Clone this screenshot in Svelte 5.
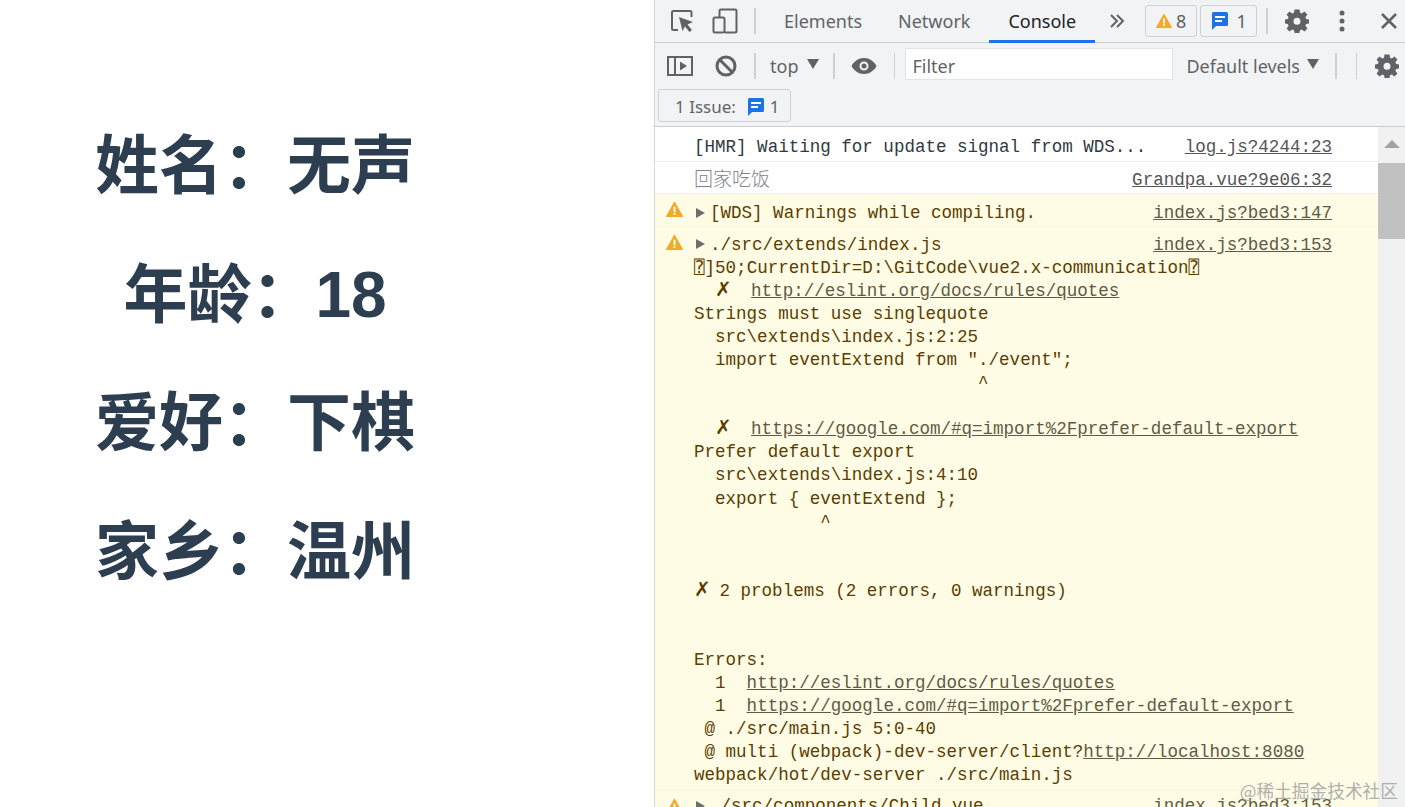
<script>
	const block = [
		'./src/extends/index.js',
		'⍰]50;CurrentDir=D:\\GitCode\\vue2.x-communication⍰',
		'  ✗  http://eslint.org/docs/rules/quotes',
		'Strings must use singlequote',
		'  src\\extends\\index.js:2:25',
		'  import eventExtend from "./event";',
		'                           ^',
		'',
		'  ✗  https://google.com/#q=import%2Fprefer-default-export',
		'Prefer default export',
		'  src\\extends\\index.js:4:10',
		'  export { eventExtend };',
		'            ^',
		'',
		'',
		'✗ 2 problems (2 errors, 0 warnings)',
		'',
		'',
		'Errors:',
		'  1  http://eslint.org/docs/rules/quotes',
		'  1  https://google.com/#q=import%2Fprefer-default-export',
		' @ ./src/main.js 5:0-40',
		' @ multi (webpack)-dev-server/client?http://localhost:8080',
		'webpack/hot/dev-server ./src/main.js'
	];

	// split a line into plain text, links and the cross marks
	function parts(line) {
		return line.split(/(https?:\/\/\S+|✗)/).map((text, i) => ({
			text,
			link: i % 2 === 1 && text !== '✗',
			cross: text === '✗'
		}));
	}

	const info = [
		{ label: '姓名\uFF1A', value: '无声' },
		{ label: '年龄\uFF1A', value: '18' },
		{ label: '爱好\uFF1A', value: '下棋' },
		{ label: '家乡\uFF1A', value: '温州' }
	];
</script>

{#snippet warnIcon(size)}
	<svg class="warn-icon" width={size} height={size} viewBox="0 0 16 16">
		<path d="M8 1.2 15.600 14.600H.4Z" fill="#f2ab26" stroke="#f2ab26" stroke-linejoin="round" />
		<rect x="7.100" y="5.400" width="1.800" height="5" fill="#fff" />
		<rect x="7.100" y="11.200" width="1.800" height="1.800" fill="#fff" />
	</svg>
{/snippet}

{#snippet msgIcon()}
	<svg width="18" height="20" viewBox="0 0 18 20">
		<path d="M2.500 1H15.500A1.500 1.500 0 0 1 17 2.500V13.500A1.500 1.500 0 0 1 15.500 15H5L1 19V2.500A1.500 1.500 0 0 1 2.500 1Z" fill="#1a73e8" />
		<rect x="4" y="5" width="10" height="2" fill="#fff" />
		<rect x="4" y="9" width="7" height="2" fill="#fff" />
	</svg>
{/snippet}

{#snippet gear()}
	<svg width="24" height="24" viewBox="0 0 24 24">
		<path
			d="M9.500 .5H14.500L15 3.800 16.800 4.600 19.500 2.600 22.400 5.500 20.400 8.200 21.200 10 24 10.500V14.500L21.200 15 20.400 16.800 22.400 19.500 19.500 22.400 16.800 20.400 15 21.200 14.500 24H9.500L9 21.200 7.200 20.400 4.500 22.400 1.600 19.500 3.600 16.800 2.800 15 0 14.500V10.500L2.800 10 3.600 8.200 1.600 5.500 4.500 2.600 7.200 4.600 9 3.800ZM12 8.800A3.500 3.500 0 1 0 12 15.800 3.500 3.500 0 1 0 12 8.800Z"
			fill="#5f6368"
			fill-rule="evenodd"
		/>
	</svg>
{/snippet}

<div class="page">
	<main class="card">
		{#each info as row}
			<h1>{row.label}{row.value}</h1>
		{/each}
	</main>

	<aside class="devtools">
		<nav class="tabs">
			<svg class="inspect" width="24" height="24" viewBox="0 0 24 24" fill="none">
				<path d="M8 21H3.500A1.500 1.500 0 0 1 2 19.500V3.500A1.500 1.500 0 0 1 3.500 2H20A1.500 1.500 0 0 1 21.500 3.500V8" stroke="#5f6368" stroke-width="2" />
				<path d="M9 8 23 13 17.500 15.500 22 21 19.500 23 15 17.500 12.500 22Z" fill="#5f6368" />
			</svg>
			<svg class="device" width="26" height="26" viewBox="0 0 26 26" fill="none" stroke="#5f6368" stroke-width="2">
				<path d="M7.500 9V3A1.500 1.500 0 0 1 9 1.500H23A1.500 1.500 0 0 1 24.500 3V23A1.500 1.500 0 0 1 23 24.500H13" />
				<rect x="1.500" y="9.500" width="11" height="15" rx="1.500" />
			</svg>
			<span class="sep tall"></span>
			<span class="tab elements">Elements</span>
			<span class="tab network">Network</span>
			<span class="tab active">Console</span>
			<svg class="more" width="16" height="14" viewBox="0 0 16 14" fill="none" stroke="#5f6368" stroke-width="2">
				<path d="M2 1 8 7 2 13M8 1 14 7 8 13" />
			</svg>
			<span class="badge warn">{@render warnIcon(16)}<span>8</span></span>
			<span class="badge note">{@render msgIcon()}<span>1</span></span>
			<span class="sep tall right"></span>
			<span class="gear-slot">{@render gear()}</span>
			<svg class="dots" width="6" height="22" viewBox="0 0 6 22" fill="#5f6368">
				<circle cx="3" cy="3" r="2.500" />
				<circle cx="3" cy="11" r="2.500" />
				<circle cx="3" cy="19" r="2.500" />
			</svg>
			<svg class="close" width="16" height="16" viewBox="0 0 16 16" stroke="#5f6368" stroke-width="2.600">
				<path d="M1 1 15 15M15 1 1 15" />
			</svg>
		</nav>

		<div class="filters">
			<svg class="panel" width="26" height="22" viewBox="0 0 26 22" fill="none" stroke="#5f6368" stroke-width="2">
				<rect x="1" y="2" width="24" height="18" />
				<path d="M8 2V20" />
				<path d="M13 6.500 20 11 13 15.500Z" fill="#5f6368" stroke="none" />
			</svg>
			<svg class="clear" width="22" height="22" viewBox="0 0 22 22" fill="none" stroke="#5f6368" stroke-width="3">
				<circle cx="11" cy="11" r="9" />
				<path d="M4.500 4.500 17.500 17.500" />
			</svg>
			<span class="sep mid first"></span>
			<span class="context">top</span>
			<span class="caret"></span>
			<span class="sep mid ctx"></span>
			<svg class="eye" width="26" height="18" viewBox="0 0 26 18">
				<path d="M13 1C7.500 1 3 4.300 .5 9 3 13.700 7.500 17 13 17S23 13.700 25.500 9C23 4.300 18.500 1 13 1ZM13 4.500A4.500 4.500 0 1 1 13 13.500 4.500 4.500 0 1 1 13 4.500Z" fill="#5f6368" fill-rule="evenodd" />
				<circle cx="13" cy="9" r="2.500" fill="#5f6368" />
			</svg>
			<span class="sep mid thin eye-sep"></span>
			<div class="filter-box">Filter</div>
			<span class="levels">Default levels</span>
			<span class="caret levels-caret"></span>
			<span class="sep mid levels-sep"></span>
			<span class="sep mid thin last"></span>
			<span class="gear-slot end">{@render gear()}</span>
		</div>

		<div class="issues">
			<button class="issue-btn">1 Issue:<span class="issue-icon">{@render msgIcon()}</span>1</button>
		</div>

		<div class="body">
			<div class="log">
				<div class="row hmr">
					<span class="msg">[HMR] Waiting for update signal from WDS...</span>
					<a class="src">log.js?4244:23</a>
				</div>
				<div class="row home">
					<span class="msg cn">回家吃饭</span>
					<a class="src">Grandpa.vue?9e06:32</a>
				</div>
				<div class="row warning single">
					{@render warnIcon(17)}
					<span class="arrow"></span>
					<span class="msg">[WDS] Warnings while compiling.</span>
					<a class="src">index.js?bed3:147</a>
				</div>
				<div class="row warning multi">
					{@render warnIcon(17)}
					<a class="src top">index.js?bed3:153</a>
					<span class="arrow"></span><pre>{#each block as line, i}{#if i > 0}{'\n'}{/if}{#each parts(line) as part}{#if part.link}<a>{part.text}</a>{:else if part.cross}<span class="cross">{part.text}</span>{:else}{part.text}{/if}{/each}{/each}</pre>
				</div>
				<div class="row warning cut">
					{@render warnIcon(17)}
					<span class="arrow"></span>
					<span class="msg">./src/components/Child.vue</span>
					<a class="src">index.js?bed3:153</a>
				</div>
			</div>
			<div class="scrollbar">
				<span class="up"></span>
				<span class="thumb"></span>
			</div>
			<span class="watermark">@稀土掘金技术社区</span>
		</div>
	</aside>
</div>

<style>
	:global(body) {
		margin: 0;
		background: #fff;
		overflow: hidden;
	}

	.page {
		display: flex;
		width: 1405px;
		height: 807px;
		overflow: hidden;
		font-family: "Noto Sans", "Liberation Sans", sans-serif;
	}

	.card {
		width: 510px;
		flex: none;
		margin-right: 144px;
		padding-top: 134px;
		text-align: center;
		font-family: "Liberation Sans", "Noto Sans CJK SC", sans-serif;
		color: #2c3e50;
	}

	h1 {
		margin: 0 0 64.500px;
		font-size: 64px;
		line-height: 64px;
		font-weight: 700;
	}

	.devtools {
		flex: 1;
		min-width: 0;
		display: flex;
		flex-direction: column;
		background: #f1f3f4;
		border-left: 1px solid #d3d5d8;
		color: #5f6368;
		font-size: 18px;
		position: relative;
	}

	.tabs {
		height: 42px;
		flex: none;
		display: flex;
		align-items: center;
		border-bottom: 1px solid #cbcdd1;
		box-sizing: content-box;
	}

	.inspect {
		margin-left: 15px;
	}

	.device {
		margin-left: 18px;
	}

	.sep {
		width: 2px;
		background: #cfd1d4;
		flex: none;
	}

	.tall {
		height: 26px;
		margin-left: 16px;
	}

	.tall.right {
		margin-left: 9px;
	}

	.tab {
		line-height: 42px;
		height: 42px;
		position: relative;
	}

	.elements {
		margin-left: 28px;
	}

	.network {
		margin-left: 36px;
	}

	.active {
		margin-left: 38px;
		color: #202124;
	}

	.active::after {
		content: "";
		position: absolute;
		left: -19px;
		right: -19px;
		bottom: -1px;
		height: 3px;
		background: #1a73e8;
	}

	.more {
		margin-left: 33px;
	}

	.badge {
		height: 30px;
		display: flex;
		align-items: center;
		border: 1px solid #cfd1d4;
		border-radius: 3px;
		box-sizing: content-box;
		background: #f1f3f4;
	}

	.warn {
		width: 50px;
		margin-left: 20px;
		justify-content: center;
		gap: 4px;
	}

	.note {
		width: 55px;
		margin-left: 3px;
		justify-content: center;
		gap: 8px;
	}

	.gear-slot {
		display: flex;
		margin-left: 17px;
	}

	.dots {
		margin-left: 30px;
	}

	.close {
		margin-left: 36px;
	}

	.filters {
		height: 45px;
		flex: none;
		display: flex;
		align-items: center;
	}

	.panel {
		margin-left: 12px;
	}

	.clear {
		margin-left: 22px;
	}

	.mid {
		height: 26px;
	}

	.thin {
		width: 1px;
	}

	.first {
		margin-left: 17px;
	}

	.context {
		margin-left: 14px;
	}

	.caret {
		width: 0;
		height: 0;
		margin: -4px 0 0 9px;
		border-left: 6px solid transparent;
		border-right: 6px solid transparent;
		border-top: 10px solid #5f6368;
	}

	.ctx {
		margin-left: 14px;
	}

	.eye {
		margin-left: 16px;
	}

	.eye-sep {
		margin-left: 17px;
	}

	.filter-box {
		width: 268px;
		height: 32px;
		margin: -3px 0 0 10px;
		padding-left: 6px;
		box-sizing: border-box;
		background: #fff;
		border: 1px solid #e3e4e6;
		line-height: 35px;
	}

	.levels {
		margin-left: 13px;
	}

	.levels-caret {
		margin-left: 7px;
	}

	.levels-sep {
		margin-left: 16px;
	}

	.last {
		margin-left: 19px;
	}

	.gear-slot.end {
		margin-left: 18px;
	}

	.issues {
		height: 38px;
		flex: none;
		border-bottom: 1px solid #cbcdd1;
		padding-left: 3px;
		box-sizing: content-box;
	}

	.issue-btn {
		width: 133px;
		height: 33px;
		margin-top: 1px;
		padding: 2px 0 0 16px;
		display: flex;
		align-items: center;
		box-sizing: border-box;
		background: #f1f3f4;
		border: 1px solid #cfd1d4;
		border-radius: 3px;
		color: #5f6368;
		font: inherit;
		font-size: 17px;
	}

	.issue-icon {
		display: flex;
		margin: 0 5px 0 11px;
	}

	.body {
		flex: 1;
		min-height: 0;
		display: flex;
		background: #fff;
		position: relative;
		overflow: hidden;
		font-family: "Liberation Mono", "Noto Sans CJK SC", monospace;
		font-size: 17.550px;
		line-height: 23px;
	}

	.log {
		flex: 1;
		min-width: 0;
	}

	.row {
		position: relative;
		padding-left: 39px;
		padding-right: 46px;
		display: flex;
		align-items: center;
		box-sizing: border-box;
		color: #202124;
		border-bottom: 1px solid #f0f0f0;
	}

	.hmr {
		height: 35px;
		padding-top: 7px;
		color: #303942;
	}

	.home {
		height: 32px;
	}

	.home .src {
		margin-top: 6px;
	}

	.src {
		margin-left: auto;
		color: #555;
		text-decoration: underline;
		white-space: pre;
	}

	.cn {
		font-family: "Noto Sans CJK SC", sans-serif;
		font-weight: 300;
		font-size: 19px;
		color: #808488;
	}

	.warning {
		background: #fffce6;
		color: #5c3c00;
		border-bottom: 1px solid #fdf5d6;
	}

	.warning .src {
		color: #5f5a45;
	}

	.single {
		height: 33px;
		padding-top: 6px;
	}

	.warn-icon {
		flex: none;
	}

	.warning > .warn-icon {
		position: absolute;
		left: 11px;
		top: 7px;
	}

	.arrow {
		width: 0;
		height: 0;
		flex: none;
		margin: 0 5px 0 2px;
		border-left: 9px solid #6e6e6e;
		border-top: 5px solid transparent;
		border-bottom: 5px solid transparent;
	}

	.multi {
		display: block;
		padding-top: 7px;
		padding-bottom: 3px;
		line-height: 23.050px;
	}

	.multi .arrow {
		display: inline-block;
		vertical-align: 1px;
	}

	.src.top {
		float: right;
	}

	pre {
		display: inline;
		margin: 0;
		font: inherit;
	}

	pre a {
		color: #5f5a45;
		text-decoration: underline;
	}

	.cross {
		display: inline-block;
		width: 15px;
		font-family: "DejaVu Sans", sans-serif;
		font-size: 20px;
		font-weight: 700;
		line-height: 0;
	}

	.cut {
		height: 40px;
		align-items: flex-start;
		padding-top: 4px;
		border-bottom: 0;
	}

	.cut .arrow {
		margin-top: 6px;
	}

	.scrollbar {
		width: 27px;
		flex: none;
		background: #f1f1f1;
		display: flex;
		flex-direction: column;
		align-items: center;
	}

	.up {
		width: 0;
		height: 0;
		margin-top: 13px;
		border-left: 8px solid transparent;
		border-right: 8px solid transparent;
		border-bottom: 8px solid #a3a3a3;
	}

	.thumb {
		width: 27px;
		height: 76px;
		margin-top: 15px;
		background: #c1c1c1;
	}

	.watermark {
		position: absolute;
		right: 7px;
		top: 651px;
		font-family: "Noto Sans CJK SC", sans-serif;
		font-size: 17.700px;
		line-height: 24px;
		color: #a8a8a8;
		opacity: 0.9;
	}
</style>
